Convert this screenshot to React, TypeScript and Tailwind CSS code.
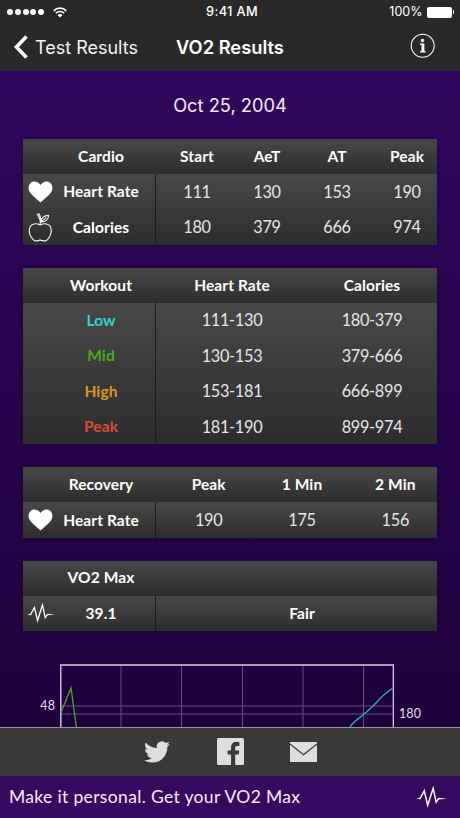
import type { ReactNode } from "react";

const heading = "text-center text-[15.5px] font-bold leading-none tracking-[0.1px] text-white";
const figure = "text-center text-[16.3px] font-normal leading-none tracking-[-0.3px] text-[#e6e6e6]";

function Heart() {
  return (
    <svg viewBox="0 0 26 23" className="h-[22px] w-[25px]" fill="#fff">
      <path d="M13 22.6C10.4 19.8 4.6 15.6 2.1 12C-.3 8.500 .2 4.200 2.600 2C5.600 -.6 10.700 .1 13 4.300C15.300 .1 20.400 -.6 23.400 2C25.800 4.200 26.300 8.500 23.900 12C21.400 15.600 15.600 19.800 13 22.600Z" />
    </svg>
  );
}

function Apple() {
  return (
    <svg viewBox="0 0 26 31" className="h-[29.5px] w-[24.5px]" fill="none" stroke="#f4f4f4" strokeWidth="1.2" strokeLinejoin="round" strokeLinecap="round">
      <path d="M13 12.600C10.800 11.500 8.600 10.900 6.400 11.500C3 12.400 1.200 15.200 1.300 18.800C1.500 23.200 4.200 27.800 7.200 29.200C9.400 30.100 10.800 28.700 13 28.700C15.200 28.700 16.800 30.100 18.900 29.200C22 27.800 24.500 23.200 24.700 18.800C24.800 15.200 22.900 12.400 19.700 11.500C17.400 10.900 15.200 11.500 13 12.600Z" />
      <path d="M12.900 12.300C13.300 9.500 13 6.300 11.300 3.400L10 1.300L12 .9L12.800 3.200C13.700 5.300 14 7.500 13.800 9.500" />
      <path d="M14 9.300C13.500 5.500 16.600 2.600 22 2.400C21.600 6.700 18.500 9.500 14 9.300ZM14.200 9L19 5" />
    </svg>
  );
}

function Pulse({ className }: { className: string }) {
  return (
    <svg viewBox="0 0 30 24" className={className} fill="none" stroke="#fff" strokeLinejoin="miter" strokeMiterlimit="8">
      <path d="M4 12.800L8 5.500L11.300 19.500L16.600 3L19.500 16.500L22 12.800" strokeWidth="1.4" />
      <path d="M0 13.200L4.500 12.300V13.800ZM21.500 12.200L30 13.200L21.500 13.900Z" fill="#fff" stroke="none" />
    </svg>
  );
}

type Row = { label: string; color?: string; icon?: ReactNode; values: string[]; strong?: boolean };

function ResultTable({ title, columns, rows, grid }: { title: string; columns: string[]; rows: Row[]; grid: string }) {
  return (
    <section className="w-[414px] overflow-hidden text-white shadow-[0_0_2px_#17121c]">
      <div className="flex h-[35px] items-center bg-linear-to-b from-[#484848] to-[#2d2d2d]">
        <div className={`ml-[24px] w-[108px] shrink-0 ${heading}`}>{title}</div>
        <div className={`ml-[7px] grid w-[280px] shrink-0 ${grid}`}>
          {columns.map((c) => (
            <div key={c} className={heading}>{c}</div>
          ))}
        </div>
      </div>
      <div className="flex bg-linear-to-b from-[#484848] to-[#2d2d2d]">
        <div className="w-[133px] shrink-0 border-r border-[#1b1b1b]">
          {rows.map((r) => (
            <div key={r.label} className="flex h-[35.4px] items-center pt-[0.6px]">
              <div className="flex w-[24px] shrink-0 justify-start pl-[5px]">
                <div className="shrink-0">{r.icon}</div>
              </div>
              <div className={`w-[108px] ${heading}`}>
                <span className={r.color}>{r.label}</span>
              </div>
            </div>
          ))}
        </div>
        <div className="ml-[6px] w-[280px] shrink-0">
          {rows.map((r) => (
            <div key={r.label} className={`grid h-[35.4px] items-center ${grid}`}>
              {r.values.map((v) => (
                <div key={v} className={r.strong ? heading : figure}>{v}</div>
              ))}
            </div>
          ))}
        </div>
      </div>
    </section>
  );
}

function StatusBar() {
  return (
    <div className="grid h-[23px] grid-cols-3 items-center pl-[7px] pr-[6px] pt-[1px] font-['Inter',sans-serif] text-white">
      <div className="flex items-center">
        <div className="flex gap-[1.7px]">
          {[0, 1, 2, 3, 4].map((n) => (
            <span key={n} className="size-[6.100px] rounded-full bg-white" />
          ))}
        </div>
        <svg viewBox="0 0 14 11" className="ml-[9px] h-[11px] w-[14px]" fill="none" stroke="#fff" strokeWidth="1.700">
          <path d="M.7 3.900C4.200 .3 9.800 .3 13.300 3.900M2.900 6.200C5.200 3.900 8.800 3.900 11.100 6.200" />
          <path d="M4.500 8C5.900 6.700 8.100 6.700 9.500 8L7 10.500Z" fill="#fff" stroke="none" />
        </svg>
      </div>
      <div className="pl-[3px] pt-[1px] text-center text-[12.8px] font-medium leading-none tracking-[0.35px]">9:41 AM</div>
      <div className="flex items-center justify-end">
        <span className="text-[12.5px] leading-none">100%</span>
        <span className="ml-[4px] h-[11px] w-[25px] rounded-[2px] bg-white" />
        <span className="ml-[1px] h-[4px] w-[1.5px] rounded-r-full bg-white" />
      </div>
    </div>
  );
}

function NavBar() {
  return (
    <div className="flex h-[48px] items-center pl-[14px] font-['Inter',sans-serif] text-white">
      <svg viewBox="0 0 14 24" className="h-[24px] w-[14px]" fill="none" stroke="#fff" strokeWidth="3.600">
        <path d="M12.500 1.500L2.500 12L12.500 22.500" />
      </svg>
      <div className="ml-[7px] w-[141px] whitespace-nowrap pt-[1px] text-[18px] leading-none text-[#f3f3f3]">Test Results</div>
      <div className="w-[234px] whitespace-nowrap pt-[1px] text-[18.3px] font-semibold leading-none">VO2 Results</div>
      <svg viewBox="0 0 26 26" className="mb-[3px] size-[26px]" fill="#fff">
        <circle cx="12.700" cy="12.700" r="11.500" fill="none" stroke="#fff" strokeWidth="1.100" />
        <circle cx="12.500" cy="7.500" r="1.700" />
        <path d="M10 10.600H14.400V18.200H15.700V19.600H10V18.200H11.500V12H10Z" />
      </svg>
    </div>
  );
}

function Chart() {
  return (
    <div className="mt-[33px] flex h-[64px] overflow-hidden text-[12.5px] leading-none tracking-[0.1px] text-[#eadff0]">
      <div className="w-[60px] shrink-0 pt-[36px] pr-[5px] text-right">48</div>
      <svg viewBox="0 0 334 64" className="h-[64px] w-[334px] shrink-0" fill="none">
        <path d="M61 1V64M121.500 1V64M182.500 1V64M243 1V64M303.500 1V64M1 42H333M1 50H333" stroke="#6c4e85" strokeWidth="1" />
        <path d="M.8 64V1H333.400V64" stroke="#dcc6e2" strokeWidth="1.400" />
        <path d="M1 48.500L11 24L16.500 64" stroke="#4f9a2c" strokeWidth="1.400" />
        <path d="M290 63C292 59 298 55 303 51C308 47 312 43 317 38C322 32 327 28 333 24" stroke="#28abc0" strokeWidth="1.500" />
      </svg>
      <div className="pt-[44px] pl-[5px]">180</div>
    </div>
  );
}

function ShareBar() {
  return (
    <div className="flex h-[49px] items-center border-t-[1.5px] border-[#99919c] bg-[#393939] pl-[144px] pb-[1px]">
      <svg viewBox="0 0 24 24" className="size-[26px]" fill="#dedede">
        <path d="M23.950 4.570a10 10 0 0 1-2.820.770 4.960 4.960 0 0 0 2.160-2.720c-.950.550-2 .960-3.130 1.180a4.920 4.920 0 0 0-8.380 4.480C7.690 8.090 4.070 6.130 1.640 3.160a4.820 4.820 0 0 0-.670 2.480c0 1.710.870 3.210 2.190 4.100a4.900 4.900 0 0 1-2.230-.620v.060a4.920 4.920 0 0 0 3.950 4.830 5 5 0 0 1-2.210.080 4.940 4.940 0 0 0 4.600 3.420A9.870 9.870 0 0 1 0 19.540a13.990 13.990 0 0 0 7.550 2.210c9.050 0 14-7.500 14-13.980 0-.210 0-.420-.010-.630a9.940 9.940 0 0 0 2.410-2.570Z" />
      </svg>
      <svg viewBox="0 0 27 27" className="ml-[46.5px] size-[27px]">
        <rect width="27" height="27" rx="1.500" fill="#dedede" />
        <path d="M14 27V16.600H10.600V12.500H14V9.500C14 6 16.100 4.100 19.200 4.100C20.700 4.100 22 4.200 22.400 4.300V7.900H20.200C18.500 7.900 18.200 8.800 18.200 10V12.500H22.200L21.700 16.600H18.200V27Z" fill="#393939" />
      </svg>
      <svg viewBox="0 0 27 20" className="ml-[46.5px] h-[20px] w-[27px]">
        <rect width="27" height="20" fill="#dedede" />
        <path d="M0 2L13.500 12.800L27 2" fill="none" stroke="#393939" strokeWidth="1.200" />
      </svg>
    </div>
  );
}

export default function App() {
  return (
    <div className="flex h-[818px] w-[460px] flex-col overflow-hidden bg-[#280050] font-['Lato',sans-serif]">
      <header className="h-[71px] shrink-0 bg-[#292929]">
        <StatusBar />
        <NavBar />
      </header>
      <main className="h-[656px] shrink-0 overflow-hidden bg-linear-to-b from-[#30065c] to-[#1e003d]">
        <div className="flex h-[68px] items-center justify-center font-['Inter',sans-serif] text-[18.300px] leading-none text-[#f8e9ff]">Oct 25, 2004</div>
        <div className="flex flex-col items-start gap-[23px] pl-[23px]">
          <ResultTable
            title="Cardio"
            columns={["Start", "AeT", "AT", "Peak"]}
            grid="grid-cols-4"
            rows={[
              { label: "Heart Rate", icon: <Heart />, values: ["111", "130", "153", "190"] },
              { label: "Calories", icon: <Apple />, values: ["180", "379", "666", "974"] },
            ]}
          />
          <ResultTable
            title="Workout"
            columns={["Heart Rate", "Calories"]}
            grid="grid-cols-2"
            rows={[
              { label: "Low", color: "text-[#2bd3d8]", values: ["111-130", "180-379"] },
              { label: "Mid", color: "text-[#48ad14]", values: ["130-153", "379-666"] },
              { label: "High", color: "text-[#df9912]", values: ["153-181", "666-899"] },
              { label: "Peak", color: "text-[#dd4c2d]", values: ["181-190", "899-974"] },
            ]}
          />
          <ResultTable
            title="Recovery"
            columns={["Peak", "1 Min", "2 Min"]}
            grid="grid-cols-3"
            rows={[{ label: "Heart Rate", icon: <Heart />, values: ["190", "175", "156"] }]}
          />
          <ResultTable
            title="VO2 Max"
            columns={[]}
            grid="grid-cols-1"
            rows={[{ label: "39.1", icon: <Pulse className="-ml-[1px] h-[23px] w-[28px]" />, values: ["Fair"], strong: true }]}
          />
        </div>
        <Chart />
      </main>
      <ShareBar />
      <footer className="flex h-[42px] shrink-0 items-center justify-between bg-[#370860] pl-[9px] pr-[13px] text-[#fbeaff]">
        <span className="text-[17.500px] leading-none tracking-[0.34px]">Make it personal. Get your VO2 Max</span>
        <Pulse className="h-[25px] w-[31px]" />
      </footer>
    </div>
  );
}
